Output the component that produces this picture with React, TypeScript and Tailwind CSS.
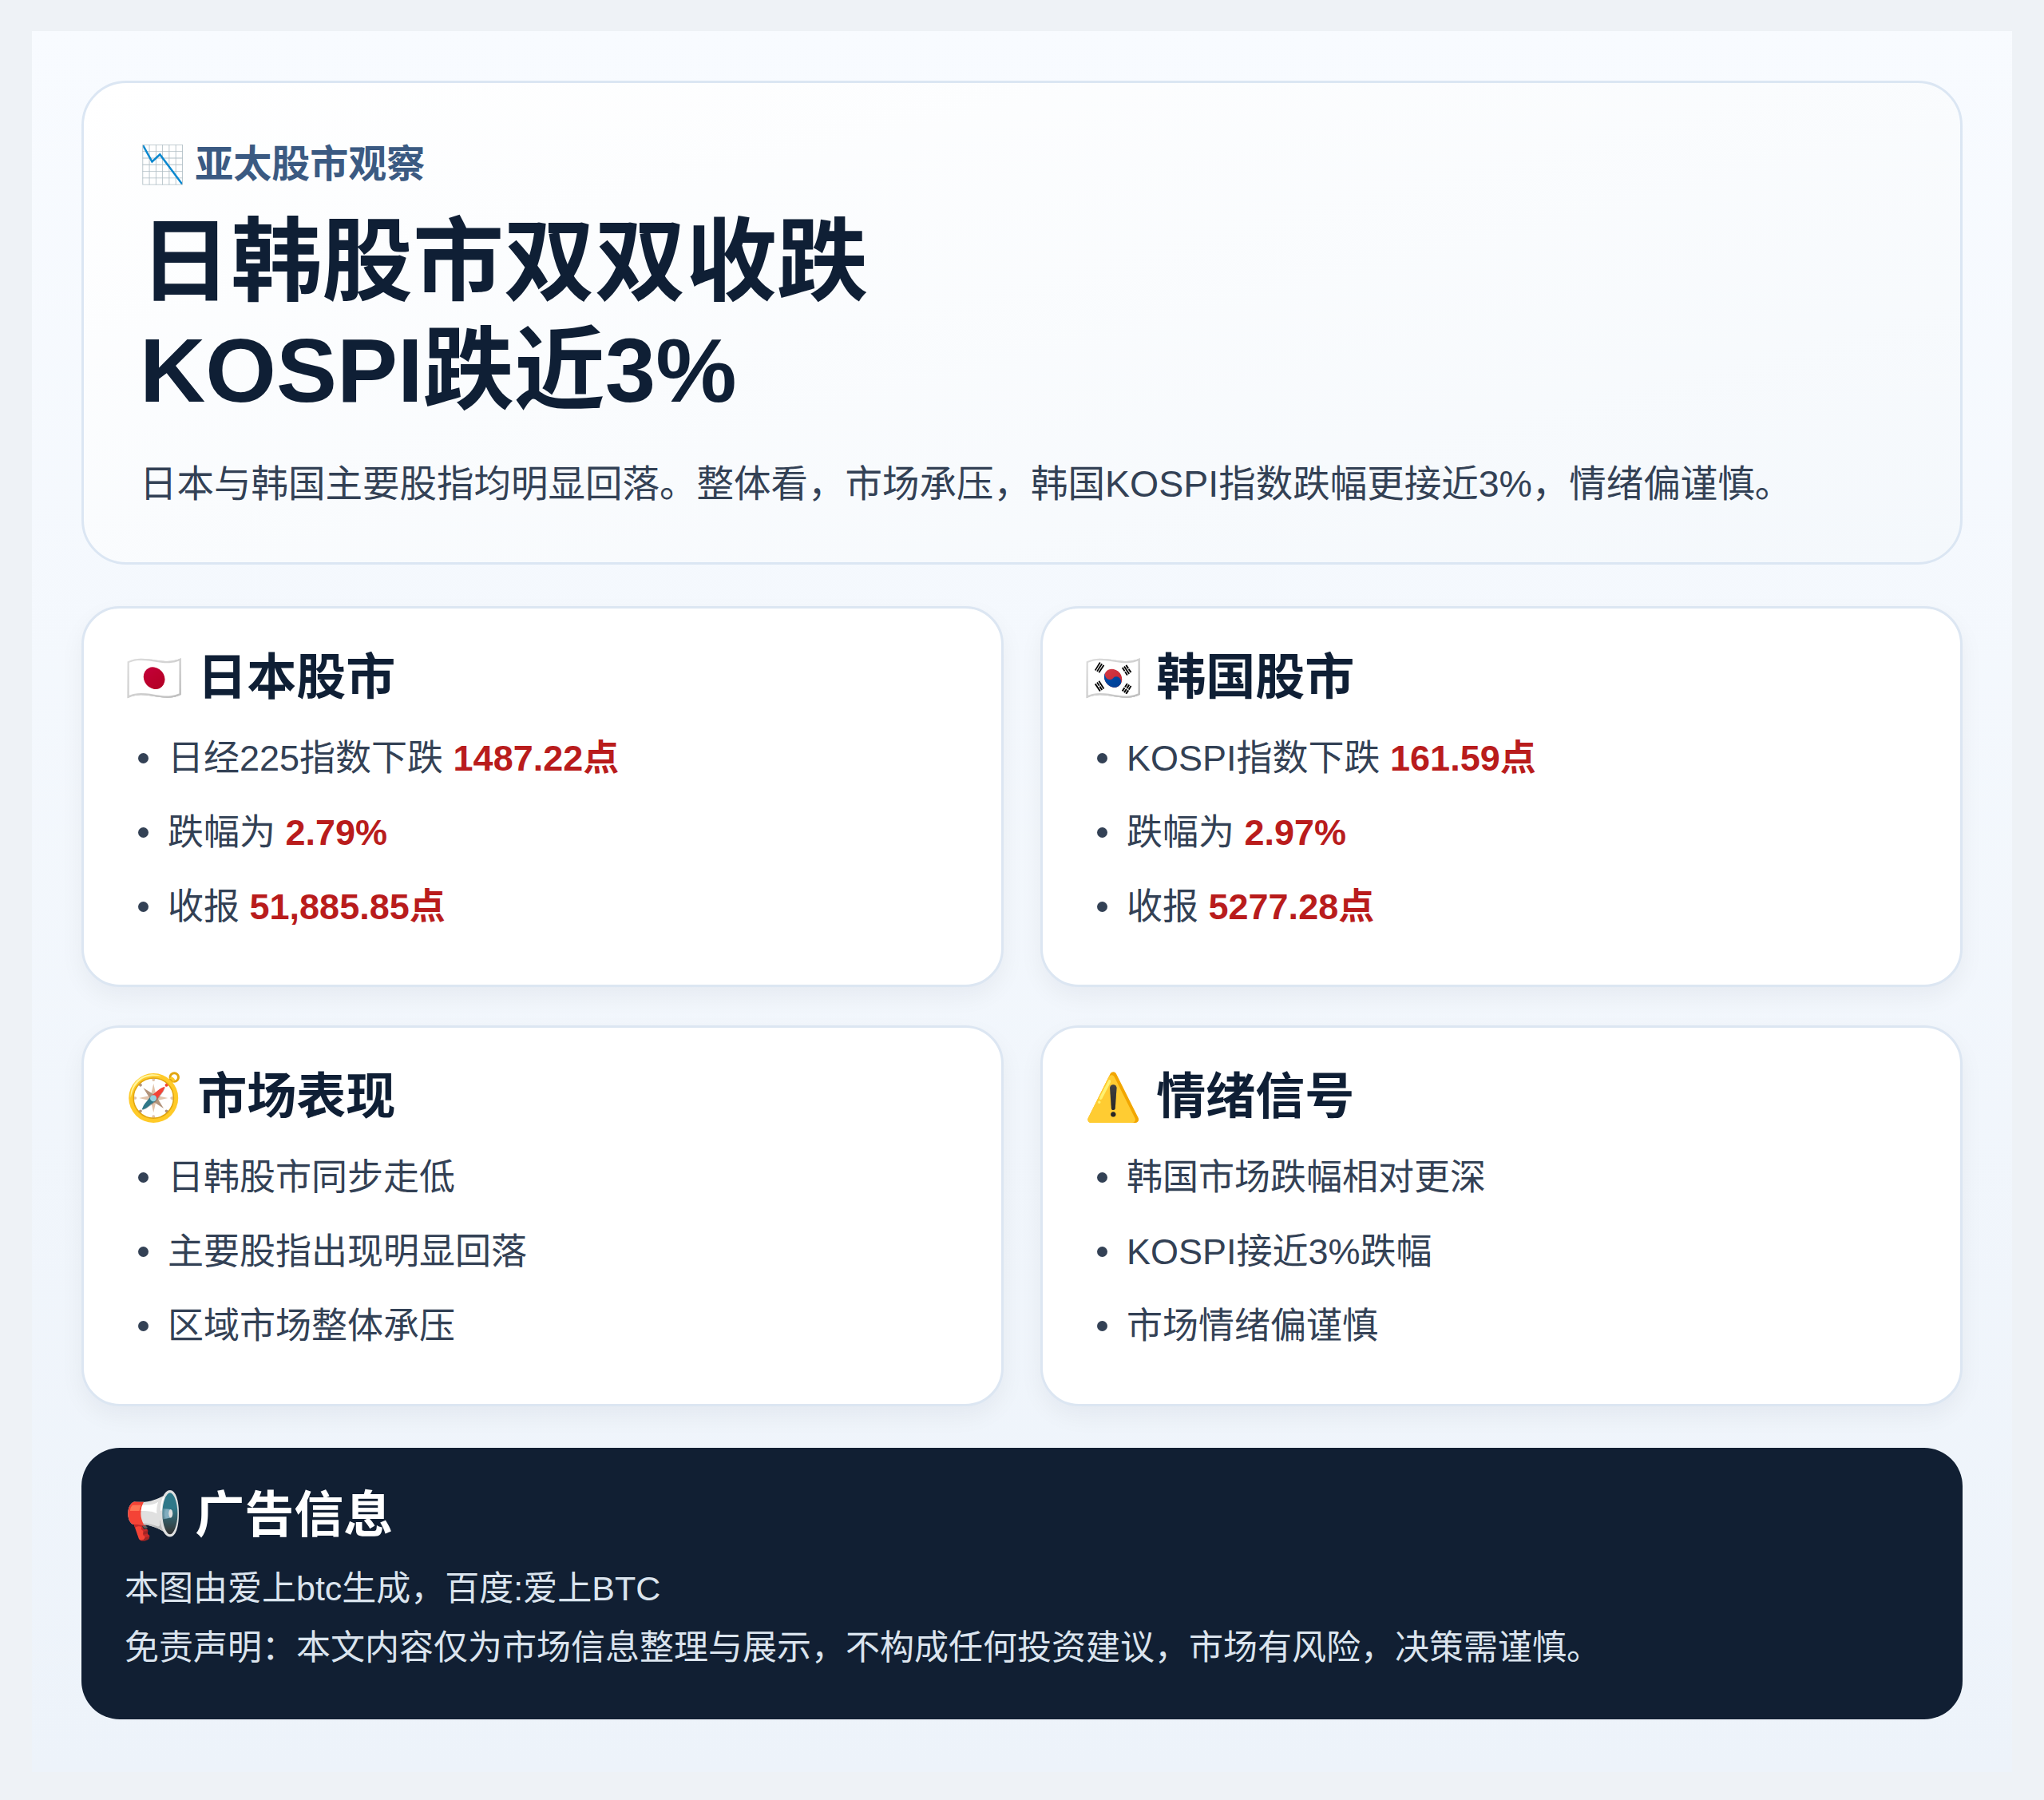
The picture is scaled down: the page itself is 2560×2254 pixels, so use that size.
const F = { fontFamily: '"Liberation Sans", "Noto Sans CJK SC", "Noto Color Emoji", sans-serif' };

function Card({ icon, title, items }: { icon: string; title: string; items: React.ReactNode[] }) {
  return (
    <div className="rounded-[48px] border-[3px] border-[#dce6f2] bg-white px-[52px] pt-[56px] pb-[66px] shadow-[0_12px_30px_rgba(15,23,42,0.05)]">
      <div className="flex items-center gap-[18px] text-[62px] font-bold leading-none text-[#0f1f35]">
        <span className="text-[58px]">{icon}</span>
        <span>{title}</span>
      </div>
      <ul className="mt-[38px] flex flex-col gap-[30px] pl-[16px]">
        {items.map((it, i) => (
          <li key={i} className="flex items-center gap-[24px] text-[45px] leading-[63px] text-[#334155]">
            <span className="h-[13px] w-[13px] shrink-0 rounded-full bg-[#334155]" />
            <span>{it}</span>
          </li>
        ))}
      </ul>
    </div>
  );
}

const R = ({ children }: { children: React.ReactNode }) => (
  <b className="font-bold text-[#b91c1c]">{children}</b>
);

export default function App() {
  return (
    <div style={F} className="min-h-[2254px] bg-[#eef2f6] px-[40px] pt-[39px] pb-[40px]">
      <div className="bg-gradient-to-b from-[#f8fbff] to-[#edf3fa] px-[62px] pt-[62px] pb-[66px]">
        <div className="rounded-[56px] border-[3px] border-[#dbe6f3] bg-gradient-to-br from-white to-[#f4f8fc] px-[70px] pt-[66px] pb-[68px]">
          <div className="flex items-center gap-[12px] text-[48px] font-bold text-[#3b5a82]">
            <span className="text-[46px]">📉</span>
            <span>亚太股市观察</span>
          </div>
          <h1 className="mt-[18px] text-[114px] font-bold leading-[136px] text-[#0f1f35]">
            日韩股市双双收跌
            <br />
            KOSPI跌近3%
          </h1>
          <p className="mt-[44px] text-[46.5px] leading-[60px] text-[#334155]">
            日本与韩国主要股指均明显回落。整体看，市场承压，韩国KOSPI指数跌幅更接近3%，情绪偏谨慎。
          </p>
        </div>

        <div className="mt-[52px] grid grid-cols-2 gap-x-[46px] gap-y-[48px]">
          <Card
            icon="🇯🇵"
            title="日本股市"
            items={[
              <>日经225指数下跌 <R>1487.22点</R></>,
              <>跌幅为 <R>2.79%</R></>,
              <>收报 <R>51,885.85点</R></>,
            ]}
          />
          <Card
            icon="🇰🇷"
            title="韩国股市"
            items={[
              <>KOSPI指数下跌 <R>161.59点</R></>,
              <>跌幅为 <R>2.97%</R></>,
              <>收报 <R>5277.28点</R></>,
            ]}
          />
          <Card icon="🧭" title="市场表现" items={["日韩股市同步走低", "主要股指出现明显回落", "区域市场整体承压"]} />
          <Card icon="⚠️" title="情绪信号" items={["韩国市场跌幅相对更深", "KOSPI接近3%跌幅", "市场情绪偏谨慎"]} />
        </div>

        <div className="mt-[52px] rounded-[48px] bg-[#111f33] px-[54px] pt-[54px] pb-[60px]">
          <div className="flex items-center gap-[16px] text-[62px] font-bold leading-none text-white">
            <span className="text-[58px]">📢</span>
            <span>广告信息</span>
          </div>
          <div className="mt-[30px] flex flex-col gap-[14px] text-[43px] leading-[60px] text-[#dbe4ee]">
            <p>本图由爱上btc生成，百度:爱上BTC</p>
            <p>免责声明：本文内容仅为市场信息整理与展示，不构成任何投资建议，市场有风险，决策需谨慎。</p>
          </div>
        </div>
      </div>
    </div>
  );
}
